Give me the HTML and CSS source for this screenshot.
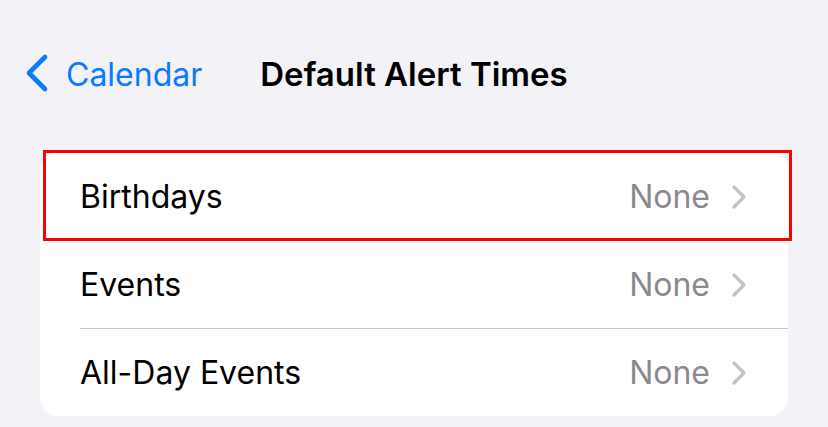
FILE: index.html
```html
<!DOCTYPE html>
<html lang="en">
<head>
<meta charset="utf-8">
<title>Default Alert Times</title>
<link rel="stylesheet" href="styles.css">
</head>
<body>
<div class="screen">
  <header class="nav">
    <a class="back" href="#">
      <svg class="back-icon" width="26" height="42" viewBox="0 0 26 42"><path d="M20 4 L4 20 L20 36" fill="none" stroke="#0a7aff" stroke-width="4.6" stroke-linecap="round" stroke-linejoin="round"/></svg>
      <span class="back-label">Calendar</span>
    </a>
    <h1 class="title">Default Alert Times</h1>
    <div class="spacer"></div>
  </header>
  <section class="card">
    <div class="row highlighted">
      <span class="label">Birthdays</span>
      <span class="value">None</span>
      <svg class="chev" width="16" height="26" viewBox="0 0 16 26"><path d="M3 3 L13 13 L3 23" fill="none" stroke="#c4c4c7" stroke-width="3.4" stroke-linecap="round" stroke-linejoin="round"/></svg>
      <div class="highlight"></div>
    </div>
    <div class="row">
      <span class="label">Events</span>
      <span class="value">None</span>
      <svg class="chev" width="16" height="26" viewBox="0 0 16 26"><path d="M3 3 L13 13 L3 23" fill="none" stroke="#c4c4c7" stroke-width="3.4" stroke-linecap="round" stroke-linejoin="round"/></svg>
    </div>
    <div class="row">
      <span class="label">All-Day Events</span>
      <span class="value">None</span>
      <svg class="chev" width="16" height="26" viewBox="0 0 16 26"><path d="M3 3 L13 13 L3 23" fill="none" stroke="#c4c4c7" stroke-width="3.4" stroke-linecap="round" stroke-linejoin="round"/></svg>
    </div>
  </section>
</div>
</body>
</html>
```

FILE: styles.css
```css
* { box-sizing: border-box; }
html, body {
  margin: 0;
  padding: 0;
  background: #f2f2f7;
}
body {
  font-family: Inter, "Noto Sans", "Liberation Sans", sans-serif;
  color: #000;
  width: 828px;
  height: 427px;
  overflow: hidden;
}
.screen {
  padding-top: 30px;
}
.nav {
  height: 88px;
  display: grid;
  grid-template-columns: 1fr auto 1fr;
  align-items: center;
}
.back {
  display: flex;
  align-items: center;
  text-decoration: none;
  color: #0a7aff;
  padding-left: 25px;
  gap: 15px;
}
.back-icon { display: block; }
.back-label {
  font-size: 32px;
  font-weight: 400;
  letter-spacing: 0;
}
.title {
  margin: 0;
  font-size: 33px;
  font-weight: 600;
  letter-spacing: 0;
}
.card {
  margin: 34px 40px 0 40px;
  background: #fff;
  border-radius: 18px;
}
.row {
  position: relative;
  height: 88px;
  display: flex;
  align-items: center;
  padding: 1px 41px 0 40px;
}
.row + .row::before {
  content: "";
  position: absolute;
  top: 0;
  left: 40px;
  right: 0;
  height: 1px;
  background: #c6c6c8;
}
.label {
  flex: 1;
  font-size: 32px;
  letter-spacing: 0;
}
.value {
  font-size: 32px;
  color: #8a8a8e;
  letter-spacing: 0;
  margin-right: 21px;
}
.chev { display: block; }
.highlight {
  position: absolute;
  top: -2px;
  left: 3px;
  right: -4px;
  bottom: -1px;
  border: 3.5px solid #ff0000;
  z-index: 2;
}
```
